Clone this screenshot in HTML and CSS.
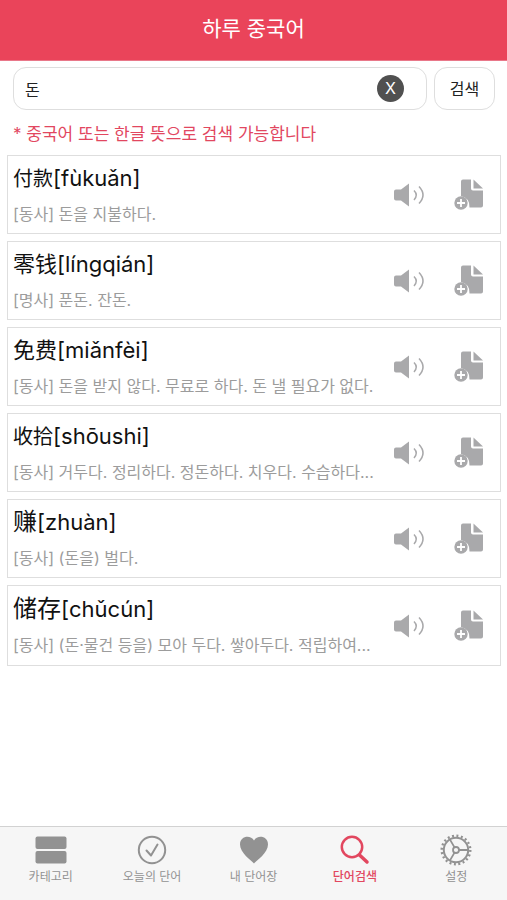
FILE: index.html
```html
<!DOCTYPE html>
<html lang="ko">
<head>
<meta charset="utf-8">
<meta name="viewport" content="width=device-width, initial-scale=1">
<title>하루 중국어</title>
<link rel="stylesheet" href="styles.css">
</head>
<body>
<svg class="defs" aria-hidden="true">
  <symbol id="speaker" viewBox="0 0 30 24">
    <path d="M2 6.500H7L15 .5V23.500L7 17.500H2Q0 17.500 0 15.500V8.500Q0 6.500 2 6.500Z" fill="currentColor"/>
    <path d="M20 7.500Q24.500 12 20 17M25 3.500Q33 12 25 20.500" fill="none" stroke="currentColor" stroke-width="1.500"/>
  </symbol>
  <symbol id="add" viewBox="0 0 30 32">
    <path d="M9 .5H17V9.500Q17 11.500 19 11.500H29V26.500Q29 28.500 27 28.500H15.500Q16 19 7 17V2.500Q7 .5 9 .5Z" fill="currentColor"/>
    <path d="M19.500 .5L29 9.500H19.500Z" fill="currentColor"/>
    <circle cx="7" cy="24" r="6.700" fill="currentColor"/>
    <path d="M7 20V28M3 24H11" stroke="#fff" stroke-width="1.800"/>
  </symbol>
</svg>
<header class="title-bar"><h1>하루 중국어</h1></header>
<main>
  <form class="search">
    <div class="field">
      <input type="text" value="돈" aria-label="단어">
      <button class="clear" type="button">X</button>
    </div>
    <button class="submit" type="button">검색</button>
  </form>
  <p class="hint">* 중국어 또는 한글 뜻으로 검색 가능합니다</p>
  <ul class="words">
    <li>
      <div class="entry"><h2><span class="han small">付款</span>[fùkuǎn]</h2><p>[동사] 돈을 지불하다.</p></div>
      <button type="button" aria-label="발음 듣기"><svg class="speaker"><use href="#speaker"/></svg></button>
      <button type="button" aria-label="단어장에 추가"><svg class="add"><use href="#add"/></svg></button>
    </li>
    <li>
      <div class="entry"><h2><span class="han">零钱</span>[língqián]</h2><p>[명사] 푼돈. 잔돈.</p></div>
      <button type="button" aria-label="발음 듣기"><svg class="speaker"><use href="#speaker"/></svg></button>
      <button type="button" aria-label="단어장에 추가"><svg class="add"><use href="#add"/></svg></button>
    </li>
    <li>
      <div class="entry"><h2><span class="han">免费</span>[miǎnfèi]</h2><p>[동사] 돈을 받지 않다. 무료로 하다. 돈 낼 필요가 없다.</p></div>
      <button type="button" aria-label="발음 듣기"><svg class="speaker"><use href="#speaker"/></svg></button>
      <button type="button" aria-label="단어장에 추가"><svg class="add"><use href="#add"/></svg></button>
    </li>
    <li>
      <div class="entry"><h2><span class="han small">收拾</span>[shōushi]</h2><p>[동사] 거두다. 정리하다. 정돈하다. 치우다. 수습하다...</p></div>
      <button type="button" aria-label="발음 듣기"><svg class="speaker"><use href="#speaker"/></svg></button>
      <button type="button" aria-label="단어장에 추가"><svg class="add"><use href="#add"/></svg></button>
    </li>
    <li>
      <div class="entry"><h2><span class="han large">赚</span>[zhuàn]</h2><p>[동사] (돈을) 벌다.</p></div>
      <button type="button" aria-label="발음 듣기"><svg class="speaker"><use href="#speaker"/></svg></button>
      <button type="button" aria-label="단어장에 추가"><svg class="add"><use href="#add"/></svg></button>
    </li>
    <li class="tall">
      <div class="entry"><h2><span class="han large">储存</span>[chǔcún]</h2><p>[동사] (돈·물건 등을) 모아 두다. 쌓아두다. 적립하여...</p></div>
      <button type="button" aria-label="발음 듣기"><svg class="speaker"><use href="#speaker"/></svg></button>
      <button type="button" aria-label="단어장에 추가"><svg class="add"><use href="#add"/></svg></button>
    </li>
  </ul>
</main>
<nav class="tabs">
  <a href="#category">
    <svg viewBox="0 0 32 32"><rect x="0.500" y="2.500" width="31" height="12.500" rx="2" fill="currentColor"/><rect x="0.500" y="17" width="31" height="12.500" rx="2" fill="currentColor"/></svg>
    카테고리</a>
  <a href="#today">
    <svg viewBox="0 0 32 32" fill="none" stroke="currentColor" stroke-width="2"><circle cx="16" cy="16" r="13.200"/><path d="M10.500 16.500L15 21.500L21.500 10.500" stroke-linecap="round" stroke-linejoin="round"/></svg>
    오늘의 단어</a>
  <a href="#mine">
    <svg viewBox="0 0 32 32"><path d="M16 29.500C13 26 2 19 2 10.500C2 2 12.500 .5 16 6.500C19.500 .5 30 2 30 10.500C30 19 19 26 16 29.500Z" fill="currentColor"/></svg>
    내 단어장</a>
  <a href="#search" class="active" aria-current="page">
    <svg viewBox="0 0 32 32" fill="none" stroke="currentColor"><circle cx="13" cy="13" r="10.200" stroke-width="2.500"/><path d="M20.500 21L28 28" stroke-width="3.500" stroke-linecap="round"/></svg>
    단어검색</a>
  <a href="#settings">
    <svg viewBox="0 0 32 32" fill="none" stroke="currentColor"><circle cx="16" cy="16" r="12.200" stroke-width="2"/><circle cx="16" cy="16" r="14.300" stroke-width="2.400" stroke-dasharray="1.994 2.500"/><circle cx="16" cy="16" r="3" stroke-width="1.800"/><path d="M19 16H28M14.500 13.400L10 5.600M14.500 18.600L10 26.400" stroke-width="1.800"/></svg>
    설정</a>
</nav>
</body>
</html>
```
FILE: styles.css
```css
* { box-sizing: border-box; }

body {
  margin: 0;
  min-height: 100vh;
  display: flex;
  flex-direction: column;
  background: #fff;
  color: #111;
  font-family: Inter, "Noto Sans CJK KR", sans-serif;
}

button {
  padding: 0;
  border: 0;
  background: none;
  color: inherit;
  font: inherit;
}

.defs { display: none; }

.title-bar {
  height: 61px;
  background: #ea445a;
  border-bottom: 1px solid #e9788a;
  color: #fff;
  text-align: center;
}

.title-bar h1 {
  margin: 0;
  font-size: 21px;
  font-weight: 400;
  line-height: 58px;
}

main { flex: 1; }

.search {
  display: flex;
  gap: 7px;
  padding: 6px 12px 0 13px;
}

.field {
  flex: 1;
  display: flex;
  align-items: center;
  min-width: 0;
  padding: 0 22px 0 11px;
}

.field, .submit {
  height: 43px;
  border: 1px solid #dedede;
  border-radius: 13px;
}

.field input {
  flex: 1;
  min-width: 0;
  padding: 0;
  border: 0;
  outline: 0;
  background: none;
  color: #222;
  font: 16px Inter, "Noto Sans CJK KR", sans-serif;
}

.clear {
  width: 27px;
  height: 27px;
  border-radius: 50%;
  background: #505050;
  color: #fff;
  font: 16px/27px Inter, sans-serif;
}

.submit {
  width: 61px;
  padding-bottom: 2px;
  color: #222;
  font-size: 16px;
}

.hint {
  margin: 0;
  padding: 12px 13px 9px;
  color: #e2475f;
  font-size: 17px;
  line-height: 24px;
}

.words {
  display: flex;
  flex-direction: column;
  gap: 7px;
  margin: 0;
  padding: 0 6px 0 7px;
  list-style: none;
}

.words li {
  display: flex;
  align-items: center;
  height: 79px;
  padding: 0 16px 0 5px;
  border: 1px solid #dedede;
}

.words .tall { height: 81px; }

.entry {
  flex: 1;
  min-width: 0;
  padding-bottom: 2px;
}

.entry h2 {
  margin: 0;
  font: 22px/40px Inter, "Noto Sans CJK SC", sans-serif;
}

.han {
  font-family: "Noto Sans CJK SC", sans-serif;
  line-height: 1;
}

.han.small { font-size: 20px; }
.han.large { font-size: 24px; }

.entry p {
  margin: 0;
  color: #9c9c9c;
  font-size: 16px;
  line-height: 32px;
  white-space: nowrap;
}

.words svg {
  display: block;
  color: #a9a9ab;
}

.speaker {
  width: 30px;
  height: 24px;
  margin-right: 30px;
}

.add {
  width: 30px;
  height: 32px;
}

.tabs {
  display: flex;
  height: 74px;
  padding-top: 7px;
  border-top: 1px solid #d2d2d2;
  background: #f6f6f6;
}

.tabs a {
  flex: 1;
  display: flex;
  flex-direction: column;
  align-items: center;
  color: #929292;
  font-size: 12px;
  line-height: 22px;
  text-decoration: none;
}

.tabs svg {
  width: 32px;
  height: 32px;
}

.tabs .active {
  color: #e2475f;
  font-weight: 500;
}
```
